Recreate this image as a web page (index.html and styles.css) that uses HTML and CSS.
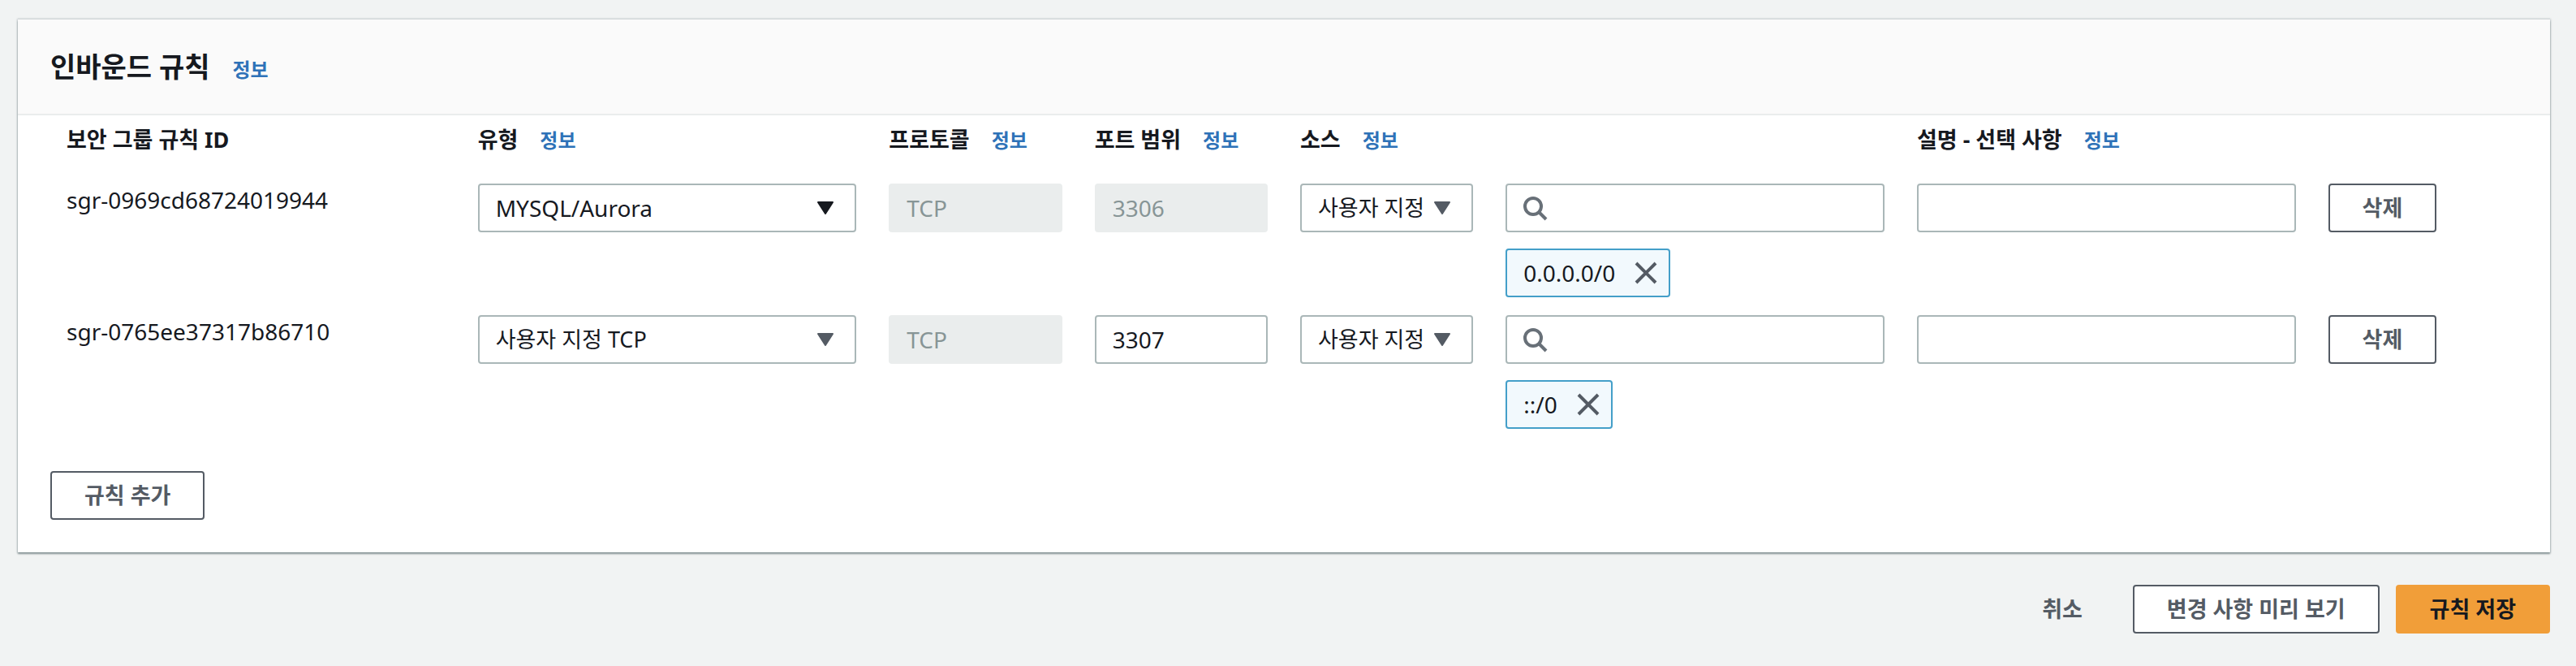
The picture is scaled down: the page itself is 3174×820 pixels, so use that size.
FILE: index.html
```html
<!DOCTYPE html>
<html lang="ko">
<head>
<meta charset="utf-8">
<title>인바운드 규칙</title>
<link rel="stylesheet" href="styles.css">
</head>
<body>
<svg class="sprite" aria-hidden="true">
  <symbol id="caret" viewBox="0 0 20 16"><path d="M1 1h18L10 15z" fill="currentColor" stroke="currentColor" stroke-width="2" stroke-linejoin="round"/></symbol>
  <symbol id="search" viewBox="0 0 30 30"><circle cx="12" cy="12" r="10" fill="none" stroke="currentColor" stroke-width="4"/><path d="M19 19l9 9" fill="none" stroke="currentColor" stroke-width="4"/></symbol>
  <symbol id="close" viewBox="0 0 28 28"><path d="M2 2l24 24M26 2L2 26" fill="none" stroke="currentColor" stroke-width="4"/></symbol>
</svg>
<main class="page">
  <section class="panel">
    <header class="panel-header">
      <h2 class="panel-title">인바운드 규칙</h2>
      <a class="info" href="#">정보</a>
    </header>
    <div class="panel-body">
      <table class="rules">
        <colgroup>
          <col class="wide"><col class="wide"><col class="narrow"><col class="narrow"><col class="narrow"><col class="wide"><col class="wide"><col class="narrow">
        </colgroup>
        <thead>
          <tr>
            <th scope="col">보안 그룹 규칙 ID</th>
            <th scope="col">유형 <a class="info" href="#">정보</a></th>
            <th scope="col">프로토콜 <a class="info" href="#">정보</a></th>
            <th scope="col">포트 범위 <a class="info" href="#">정보</a></th>
            <th scope="col" colspan="2">소스 <a class="info" href="#">정보</a></th>
            <th scope="col">설명 - 선택 사항 <a class="info" href="#">정보</a></th>
            <td></td>
          </tr>
        </thead>
        <tbody>
          <tr>
            <td>sgr-0969cd68724019944</td>
            <td><div class="select active"><select class="field" aria-label="유형"><option>MYSQL/Aurora</option></select><svg class="caret" aria-hidden="true"><use href="#caret"/></svg></div></td>
            <td><input class="field" type="text" value="TCP" aria-label="프로토콜" disabled></td>
            <td><input class="field" type="text" value="3306" aria-label="포트 범위" disabled></td>
            <td><div class="select"><select class="field hangul" aria-label="소스"><option>사용자 지정</option></select><svg class="caret" aria-hidden="true"><use href="#caret"/></svg></div></td>
            <td>
              <div class="search"><svg class="search-icon" aria-hidden="true"><use href="#search"/></svg><input class="field" type="text" aria-label="소스 검색"></div>
              <div class="token">0.0.0.0/0<button class="token-remove" type="button" aria-label="0.0.0.0/0 제거"><svg aria-hidden="true"><use href="#close"/></svg></button></div>
            </td>
            <td><input class="field" type="text" aria-label="설명"></td>
            <td><button class="button" type="button">삭제</button></td>
          </tr>
          <tr>
            <td>sgr-0765ee37317b86710</td>
            <td><div class="select"><select class="field hangul" aria-label="유형"><option>사용자 지정 TCP</option></select><svg class="caret" aria-hidden="true"><use href="#caret"/></svg></div></td>
            <td><input class="field" type="text" value="TCP" aria-label="프로토콜" disabled></td>
            <td><input class="field" type="text" value="3307" aria-label="포트 범위"></td>
            <td><div class="select"><select class="field hangul" aria-label="소스"><option>사용자 지정</option></select><svg class="caret" aria-hidden="true"><use href="#caret"/></svg></div></td>
            <td>
              <div class="search"><svg class="search-icon" aria-hidden="true"><use href="#search"/></svg><input class="field" type="text" aria-label="소스 검색"></div>
              <div class="token">::/0<button class="token-remove" type="button" aria-label="::/0 제거"><svg aria-hidden="true"><use href="#close"/></svg></button></div>
            </td>
            <td><input class="field" type="text" aria-label="설명"></td>
            <td><button class="button" type="button">삭제</button></td>
          </tr>
        </tbody>
      </table>
      <button class="button" type="button">규칙 추가</button>
    </div>
  </section>
  <footer class="actions">
    <button class="button link" type="button">취소</button>
    <button class="button" type="button">변경 사항 미리 보기</button>
    <button class="button primary" type="button">규칙 저장</button>
  </footer>
</main>
</body>
</html>
```

FILE: styles.css
```css
* {
  box-sizing: border-box;
}

body {
  margin: 0;
  background: #f1f3f3;
  color: #16191f;
  font-family: "Noto Sans", "Noto Sans CJK KR", sans-serif;
  font-size: 28px;
  line-height: 40px;
}

.sprite {
  display: none;
}

.page {
  padding: 24px 32px 40px 22px;
}

.panel {
  background: #fff;
  box-shadow: 0 2px 2px #879596, 0 0 2px 1px #c8cdd0, 0 -2px 0 #eaeded;
}

.panel-header {
  display: flex;
  align-items: baseline;
  gap: 28px;
  padding: 34px 40px 34px;
  background: #fafafa;
  border-bottom: 2px solid #eaeded;
}

.panel-title {
  margin: 0;
  font-size: 34px;
  font-weight: 700;
  line-height: 48px;
}

.info {
  color: #2e72b8;
  font-size: 24px;
  font-weight: 700;
  line-height: 24px;
  text-decoration: none;
}

th .info {
  margin-left: 20px;
}

.panel-body {
  padding: 0 40px 40px;
}

.rules {
  width: 100%;
  margin-bottom: 30px;
  table-layout: fixed;
  border-collapse: collapse;
}

.wide {
  width: 16.6667%;
}

.narrow {
  width: 8.3333%;
}

.rules th {
  padding: 10px 0 34px 20px;
  font-size: 27px;
  font-weight: 700;
  text-align: left;
  white-space: nowrap;
}

.rules td {
  padding: 0 20px 22px;
  vertical-align: top;
}

.field {
  display: block;
  width: 100%;
  height: 60px;
  margin: 0;
  padding: 0 20px;
  appearance: none;
  background: #fff;
  border: 2px solid #aab7b8;
  border-radius: 4px;
  color: #16191f;
  font: inherit;
}

.field.hangul {
  font-size: 27px;
}

.field:disabled {
  background: #eaeded;
  border-color: #eaeded;
  color: #879596;
  opacity: 1;
}

.select,
.search {
  position: relative;
}

.caret {
  position: absolute;
  top: 22px;
  right: 28px;
  width: 20px;
  height: 16px;
  color: #545b64;
  pointer-events: none;
}

.select.active .caret {
  color: #16191f;
}

.search-icon {
  position: absolute;
  top: 16px;
  left: 22px;
  width: 30px;
  height: 30px;
  color: #687078;
}

.search .field {
  padding-left: 64px;
}

.token {
  display: flex;
  align-items: center;
  gap: 24px;
  width: max-content;
  height: 60px;
  margin-top: 20px;
  padding: 0 14px 0 20px;
  background: #f2f9fd;
  border: 2px solid #449fc9;
  border-radius: 4px;
}

.token-remove {
  display: flex;
  padding: 0;
  background: none;
  border: 0;
  color: #545b64;
}

.token-remove svg {
  width: 28px;
  height: 28px;
}

.button {
  height: 60px;
  padding: 0 40px;
  background: #fff;
  border: 2px solid #545b64;
  border-radius: 4px;
  color: #545b64;
  font: inherit;
  font-size: 27px;
  font-weight: 700;
  white-space: nowrap;
}

.button.link {
  background: transparent;
  border-color: transparent;
}

.button.primary {
  background: #f19e39;
  border-color: #f19e39;
  color: #16191f;
}

.actions {
  display: flex;
  justify-content: flex-end;
  gap: 20px;
  margin-top: 40px;
}
```
